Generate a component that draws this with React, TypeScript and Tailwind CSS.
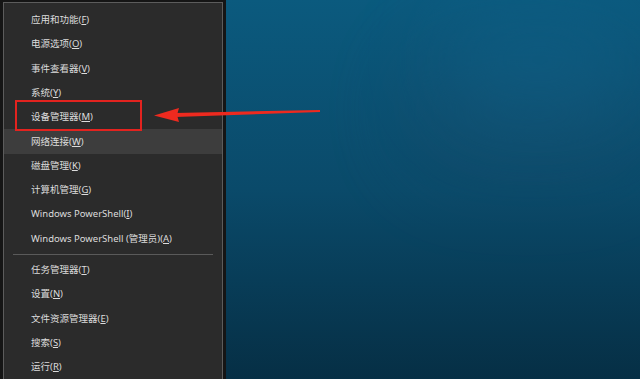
const items: [string, string][] = [
  ["应用和功能", "F"],
  ["电源选项", "O"],
  ["事件查看器", "V"],
  ["系统", "Y"],
  ["设备管理器", "M"],
  ["网络连接", "W"],
  ["磁盘管理", "K"],
  ["计算机管理", "G"],
  ["Windows PowerShell", "I"],
  ["Windows PowerShell (管理员)", "A"],
];

const items2: [string, string][] = [
  ["任务管理器", "T"],
  ["设置", "N"],
  ["文件资源管理器", "E"],
  ["搜索", "S"],
  ["运行", "R"],
];

function MenuRow({ label, hotkey, hover }: { label: string; hotkey: string; hover?: boolean }) {
  return (
    <div
      className={`h-[24.3px] flex items-center pl-[27px] text-[9.5px] text-[#dcdcdc] ${
        hover ? "bg-[#3d3d3d]" : ""
      }`}
    >
      <span>
        {label}(<span className="underline underline-offset-1">{hotkey}</span>)
      </span>
    </div>
  );
}

export default function App() {
  return (
    <div
      className="relative w-[640px] h-[379px] overflow-hidden flex bg-[#0a4563]"
      style={{ fontFamily: '"Noto Sans", "Noto Sans CJK SC", sans-serif' }}
    >
      {/* Win+X menu */}
      <div className="w-[226px] h-full pt-[2px] pl-[3px] bg-[#151515] shrink-0 flex">
        <div className="w-[220px] h-[400px] border border-[#5c5c5c] bg-[#2b2b2b] pt-[5px] flex flex-col">
          {items.map(([l, k], i) => (
            <MenuRow key={l} label={l} hotkey={k} hover={i === 5} />
          ))}
          <div className="h-[7px] flex items-center px-[9px]">
            <div className="h-px w-full bg-[#5a5a5a]" />
          </div>
          {items2.map(([l, k]) => (
            <MenuRow key={l} label={l} hotkey={k} />
          ))}
        </div>
      </div>

      {/* desktop */}
      <div className="flex-1 h-full bg-gradient-to-b from-[#0b5a7e] via-[#0a4a6a] to-[#062f45] relative">
        <div className="absolute left-[180px] top-[40px] w-[240px] h-[140px] rounded-full bg-[#1a4a68] opacity-40 blur-2xl" />
        <div className="absolute right-0 top-0 w-[200px] h-[120px] rounded-full bg-[#0d6189] opacity-50 blur-2xl" />
      </div>

      {/* annotation: red box + arrow */}
      <div className="absolute left-[15px] top-[100px] w-[127px] h-[31px] border-2 border-[#e3231f]" />
      <svg className="absolute left-0 top-0" width="640" height="379" viewBox="0 0 640 379">
        <polygon points="175,113 320,110 320,112 175,117" fill="#ee2a1f" />
        <polygon points="154,115.5 179,108 177,115 179,122" fill="#ee2a1f" />
      </svg>
    </div>
  );
}
